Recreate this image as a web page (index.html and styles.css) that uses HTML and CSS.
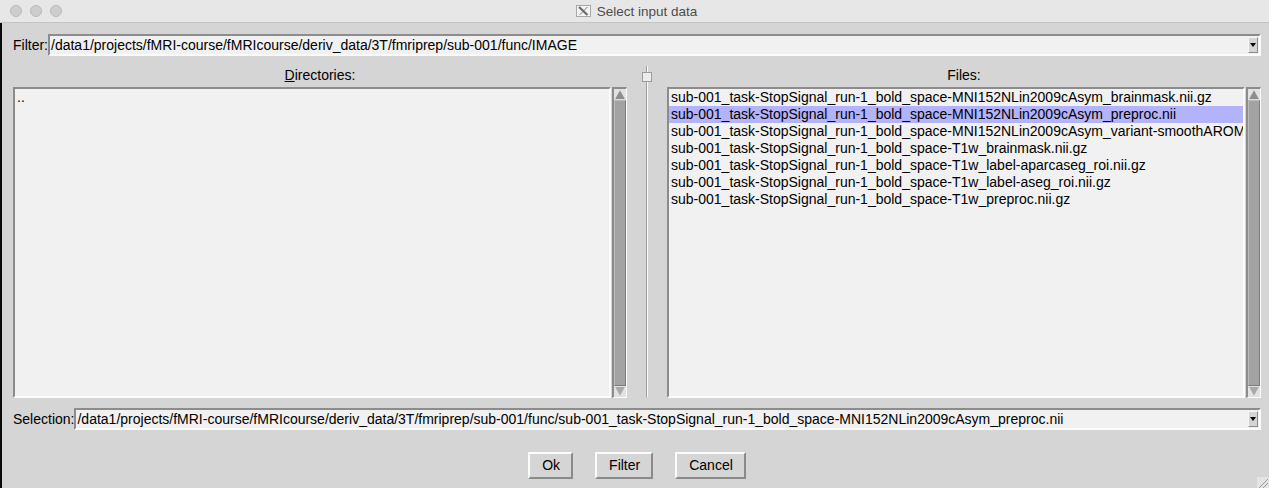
FILE: index.html
```html
<!DOCTYPE html>
<html>
<head>
<meta charset="utf-8">
<title>Select input data</title>
<link rel="stylesheet" href="styles.css">
</head>
<body>
<div class="window">
  <div class="titlebar">
    <div class="lights">
      <span class="light"></span><span class="light"></span><span class="light"></span>
    </div>
    <div class="title">
      <svg class="xicon" width="15" height="12" viewBox="0 0 15 12">
        <rect x="0.5" y="0.5" width="14" height="11" fill="#f4f4f4" stroke="#a8a8a8"/>
        <path d="M3 2 L11.5 10" stroke="#6a6a6a" stroke-width="2.2" fill="none"/>
        <path d="M11.5 2 L3.5 10" stroke="#6a6a6a" stroke-width="0.9" fill="none"/>
      </svg>
      <span class="title-text">Select input data</span>
    </div>
    <div></div>
  </div>

  <div class="main">
    <div class="field-row">
      <span class="field-label">Filter:</span>
      <div class="entry">
        <span class="entry-text">/data1/projects/fMRI-course/fMRIcourse/deriv_data/3T/fmriprep/sub-001/func/IMAGE</span>
        <span class="dropbtn"><svg width="6" height="4" viewBox="0 0 6 4"><path d="M0 0 H6 L3 4 Z" fill="#000"/></svg></span>
      </div>
    </div>

    <div class="panes">
      <div class="pane pane-left">
        <div class="pane-label"><u>D</u>irectories:</div>
        <div class="list-row">
          <div class="listbox">
            <div class="item">..</div>
          </div>
          <div class="scrollbar">
            <svg class="arrow" width="12" height="11" viewBox="0 0 12 11"><path d="M6 0.5 L11.5 10.5 H0.5 Z" fill="#8e8e8e" stroke="#f4f4f4" stroke-width="0.6"/></svg>
            <div class="thumb"></div>
            <svg class="arrow" width="12" height="11" viewBox="0 0 12 11"><path d="M0.5 0.5 H11.5 L6 10.5 Z" fill="#a9a9a9" stroke="#f4f4f4" stroke-width="0.6"/></svg>
          </div>
        </div>
      </div>

      <div class="sash">
        <div class="sash-line sash-top"></div>
        <div class="sash-handle"></div>
        <div class="sash-line sash-rest"></div>
      </div>

      <div class="pane pane-right">
        <div class="pane-label">Files:</div>
        <div class="list-row">
          <div class="listbox">
            <div class="item">sub-001_task-StopSignal_run-1_bold_space-MNI152NLin2009cAsym_brainmask.nii.gz</div>
            <div class="item selected">sub-001_task-StopSignal_run-1_bold_space-MNI152NLin2009cAsym_preproc.nii</div>
            <div class="item">sub-001_task-StopSignal_run-1_bold_space-MNI152NLin2009cAsym_variant-smoothAROMAnonaggr_preproc.nii.gz</div>
            <div class="item">sub-001_task-StopSignal_run-1_bold_space-T1w_brainmask.nii.gz</div>
            <div class="item">sub-001_task-StopSignal_run-1_bold_space-T1w_label-aparcaseg_roi.nii.gz</div>
            <div class="item">sub-001_task-StopSignal_run-1_bold_space-T1w_label-aseg_roi.nii.gz</div>
            <div class="item">sub-001_task-StopSignal_run-1_bold_space-T1w_preproc.nii.gz</div>
          </div>
          <div class="scrollbar">
            <svg class="arrow" width="12" height="11" viewBox="0 0 12 11"><path d="M6 0.5 L11.5 10.5 H0.5 Z" fill="#8e8e8e" stroke="#f4f4f4" stroke-width="0.6"/></svg>
            <div class="thumb"></div>
            <svg class="arrow" width="12" height="11" viewBox="0 0 12 11"><path d="M0.5 0.5 H11.5 L6 10.5 Z" fill="#a9a9a9" stroke="#f4f4f4" stroke-width="0.6"/></svg>
          </div>
        </div>
      </div>
    </div>

    <div class="field-row selection-row">
      <span class="field-label">Selection:</span>
      <div class="entry">
        <span class="entry-text">/data1/projects/fMRI-course/fMRIcourse/deriv_data/3T/fmriprep/sub-001/func/sub-001_task-StopSignal_run-1_bold_space-MNI152NLin2009cAsym_preproc.nii</span>
        <span class="dropbtn"><svg width="6" height="4" viewBox="0 0 6 4"><path d="M0 0 H6 L3 4 Z" fill="#000"/></svg></span>
      </div>
    </div>

    <div class="buttons">
      <button class="btn">Ok</button>
      <button class="btn">Filter</button>
      <button class="btn">Cancel</button>
    </div>
  </div>

  <svg class="grip" width="12" height="11" viewBox="0 0 12 11">
    <rect x="0" y="0" width="12" height="11" fill="#e4e4e4"/>
    <path d="M11 2 L2 11 M11 6 L6 11" stroke="#9a9a9a" stroke-width="1"/>
  </svg>
</div>
</body>
</html>
```

FILE: styles.css
```css
html, body {
  margin: 0;
  padding: 0;
  background: #d5d5d5;
}

.window {
  position: relative;
  width: 1269px;
  height: 488px;
  overflow: hidden;
  background: #d5d5d5;
  font-family: "Liberation Sans", Arial, sans-serif;
  font-size: 14px;
  color: #000;
}

/* ---------- title bar ---------- */
.titlebar {
  height: 23px;
  box-sizing: border-box;
  background: #e7e7e7;
  border-bottom: 1px solid #c4c4c4;
  display: grid;
  grid-template-columns: 1fr auto 1fr;
  align-items: center;
}

.lights {
  display: flex;
  gap: 8px;
  padding-left: 10px;
}

.light {
  width: 12px;
  height: 12px;
  box-sizing: border-box;
  border-radius: 50%;
  background: #cdcdcd;
  border: 1px solid #bababa;
}

.title {
  display: flex;
  align-items: center;
  gap: 6px;
  padding-left: 4px;
}

.title-text {
  font-size: 13.5px;
  color: #4d4d4d;
}

/* ---------- main area ---------- */
.main {
  border-left: 2px solid #0a0a0a;
  height: 465px;
  box-sizing: border-box;
  padding: 11px 8px 0 11px;
  display: flex;
  flex-direction: column;
}

.field-row {
  display: flex;
  align-items: center;
  height: 22px;
}

.field-label {
  white-space: nowrap;
  line-height: 18px;
}

.entry {
  flex: 1;
  height: 22px;
  box-sizing: border-box;
  display: flex;
  align-items: center;
  background: #f1f1f1;
  border-top: 2px solid #8c8c8c;
  border-left: 2px solid #8c8c8c;
  border-bottom: 2px solid #fbfbfb;
  border-right: 2px solid #fbfbfb;
  overflow: hidden;
}

.entry-text {
  flex: 1;
  white-space: nowrap;
  overflow: hidden;
  line-height: 18px;
  padding-left: 1px;
}

.dropbtn {
  width: 10px;
  height: 16px;
  box-sizing: border-box;
  margin-right: 1px;
  display: flex;
  align-items: center;
  justify-content: center;
  background: #d5d5d5;
  border-top: 1px solid #f6f6f6;
  border-left: 1px solid #f6f6f6;
  border-bottom: 1px solid #8c8c8c;
  border-right: 1px solid #8c8c8c;
}

/* ---------- panes ---------- */
.panes {
  display: flex;
  margin-top: 10px;
  height: 332px;
}

.pane {
  display: flex;
  flex-direction: column;
}

.pane-left {
  flex: 0 0 614px;
}

.pane-right {
  flex: 1;
  min-width: 0;
}

.pane-label {
  height: 21px;
  box-sizing: border-box;
  padding-top: 1px;
  line-height: 17px;
  text-align: center;
}

.list-row {
  display: flex;
  height: 311px;
}

.listbox {
  flex: 1;
  min-width: 0;
  box-sizing: border-box;
  background: #f1f1f1;
  border-top: 2px solid #8c8c8c;
  border-left: 2px solid #8c8c8c;
  border-bottom: 2px solid #fbfbfb;
  border-right: 2px solid #fbfbfb;
  overflow: hidden;
}

.item {
  height: 17px;
  line-height: 17px;
  padding-left: 2px;
  white-space: nowrap;
  overflow: hidden;
}

.item.selected {
  background: #b3b3fc;
}

.scrollbar {
  flex: 0 0 15px;
  margin-left: 1px;
  box-sizing: border-box;
  display: flex;
  flex-direction: column;
  align-items: center;
  background: #d9d9d9;
  border-top: 2px solid #8c8c8c;
  border-left: 2px solid #8c8c8c;
  border-bottom: 1px solid #fbfbfb;
  border-right: 1px solid #fbfbfb;
}

.arrow {
  display: block;
  flex: 0 0 11px;
  background: #e2e2e2;
}

.thumb {
  flex: 1;
  width: 12px;
  box-sizing: border-box;
  background: #a3a3a3;
  border-top: 1px solid #bcbcbc;
  border-left: 1px solid #bcbcbc;
  border-bottom: 1px solid #7c7c7c;
  border-right: 1px solid #7c7c7c;
}

/* ---------- sash ---------- */
.sash {
  flex: 0 0 40px;
  display: flex;
  flex-direction: column;
  align-items: center;
  padding-bottom: 1px;
  box-sizing: border-box;
}

.sash-line {
  width: 2px;
  box-sizing: border-box;
  background: #fafafa;
  border-left: 1px solid #9c9c9c;
}

.sash-top {
  height: 6px;
}

.sash-rest {
  flex: 1;
}

.sash-handle {
  width: 10px;
  height: 10px;
  box-sizing: border-box;
  background: #ececec;
  border: 1px solid #9c9c9c;
}

/* ---------- selection ---------- */
.selection-row {
  margin-top: 10px;
}

/* ---------- buttons ---------- */
.buttons {
  display: flex;
  justify-content: center;
  gap: 22px;
  margin-top: 22px;
}

.btn {
  height: 27px;
  box-sizing: border-box;
  padding: 0 11px 0 12px;
  margin: 0;
  font-family: "Liberation Sans", Arial, sans-serif;
  font-size: 14px;
  color: #000;
  background: #d5d5d5;
  border-top: 2px solid #fcfcfc;
  border-left: 2px solid #fcfcfc;
  border-bottom: 2px solid #8a8a8a;
  border-right: 2px solid #8a8a8a;
  border-radius: 0;
  line-height: 21px;
}

.grip {
  position: absolute;
  right: 0;
  bottom: 0;
}
```
